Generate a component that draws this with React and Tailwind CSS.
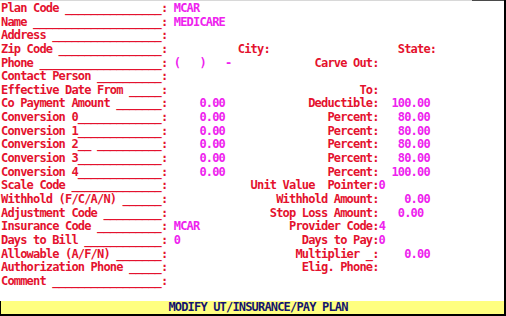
import React from 'react';

const R = 'text-[#e4122e]';
const M = 'text-[#ee22ee]';

const field = (label, under) => label + ' ' + '_'.repeat(under) + ':';

// each row: list of [column, text, colour]
const rows = [
    [[0, field('Plan Code', 15), R], [27, 'MCAR', M]],
    [[0, field('Name', 20), R], [27, 'MEDICARE', M]],
    [[0, field('Address', 17), R]],
    [[0, field('Zip Code', 16), R], [37, 'City:', R], [62, 'State:', R]],
    [[0, field('Phone', 19), R], [27, '(   )   -', M], [49, 'Carve Out:', R]],
    [[0, field('Contact Person', 10), R]],
    [[0, field('Effective Date From', 5), R], [56, 'To:', R]],
    [[0, field('Co Payment Amount', 7), R], [31, '0.00', M], [48, 'Deductible:', R], [61, '100.00', M]],
    [[0, 'Conversion 0' + '_'.repeat(13) + ':', R], [31, '0.00', M], [51, 'Percent:', R], [62, '80.00', M]],
    [[0, 'Conversion 1' + '_'.repeat(13) + ':', R], [31, '0.00', M], [51, 'Percent:', R], [62, '80.00', M]],
    [[0, 'Conversion 2__ ' + '_'.repeat(10) + ':', R], [31, '0.00', M], [51, 'Percent:', R], [62, '80.00', M]],
    [[0, 'Conversion 3' + '_'.repeat(13) + ':', R], [31, '0.00', M], [51, 'Percent:', R], [62, '80.00', M]],
    [[0, 'Conversion 4' + '_'.repeat(13) + ':', R], [31, '0.00', M], [51, 'Percent:', R], [61, '100.00', M]],
    [[0, field('Scale Code', 14), R], [39, 'Unit Value  Pointer:', R], [59, '0', M]],
    [[0, field('Withhold (F/C/A/N)', 6), R], [43, 'Withhold Amount:', R], [63, '0.00', M]],
    [[0, field('Adjustment Code', 9), R], [42, 'Stop Loss Amount:', R], [62, '0.00', M]],
    [[0, field('Insurance Code', 10), R], [27, 'MCAR', M], [45, 'Provider Code:', R], [59, '4', M]],
    [[0, field('Days to Bill', 12), R], [27, '0', M], [47, 'Days to Pay:', R], [59, '0', M]],
    [[0, field('Allowable (A/F/N)', 7), R], [46, 'Multiplier _:', R], [63, '0.00', M]],
    [[0, field('Authorization Phone', 5), R], [47, 'Elig. Phone:', R]],
    [[0, field('Comment', 17), R]],
    [],
];

const Line = ({ segs }) => {
    let pos = 0;
    return (
        <div className="h-[13.65px] leading-[13.65px] pt-[1px] whitespace-pre">
            {segs.map(([col, text, color], i) => {
                const pad = ' '.repeat(Math.max(0, col - pos));
                pos = col + text.length;
                return (
                    <span key={i}>
                        {pad}
                        <span className={color}>{text}</span>
                    </span>
                );
            })}
            {segs.length === 0 && ' '}
        </div>
    );
};

export default function App() {
    return (
        <div className="w-[506px] h-[316px] bg-white flex flex-col overflow-hidden border-r-2 border-black font-['DejaVu_Sans_Mono',monospace] font-bold text-[12px] tracking-[-0.825px]">
            {/* top edge */}
            <div className="flex h-px shrink-0">
                <div className="w-[472px] bg-[#d8d8d8]" />
                <div className="flex-1 bg-[#4a4a4a]" />
            </div>

            <div className="pl-[1px] flex flex-col">
                {rows.map((segs, i) => (
                    <Line key={i} segs={segs} />
                ))}
            </div>

            {/* status bar */}
            <div className="h-[13px] bg-[#ffff80] border-l border-black pl-[1px] leading-[13px] whitespace-pre text-[#14146e] shrink-0">
                {' '.repeat(26)}MODIFY UT/INSURANCE/PAY PLAN
            </div>
            <div className="h-[2px] bg-black shrink-0" />
        </div>
    );
}
